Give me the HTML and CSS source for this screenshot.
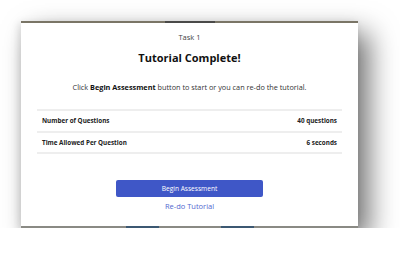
FILE: index.html
```html
<!DOCTYPE html>
<html lang="en">
<head>
    <meta charset="UTF-8">
    <meta name="viewport" content="width=device-width, initial-scale=1.0">
    <title>Tutorial Complete</title>
    <link rel="stylesheet" href="styles.css">
</head>
<body>
    <div class="stage">
        <!-- Modal card -->
        <div class="modal">
            <div class="top-edge"><span class="top-mark"></span></div>
            <div class="modal-body">
                <p class="task">Task 1</p>
                <h2 class="title">Tutorial Complete!</h2>
                <p class="intro">Click <b>Begin Assessment</b> button to start or you can re-do the tutorial.</p>

                <table class="info">
                    <tr>
                        <td>Number of Questions</td>
                        <td class="value">40 questions</td>
                    </tr>
                    <tr>
                        <td>Time Allowed Per Question</td>
                        <td class="value">6 seconds</td>
                    </tr>
                </table>

                <div class="actions">
                    <button type="button" class="btn-primary">Begin Assessment</button>
                    <a href="#" class="link">Re-do Tutorial</a>
                </div>
            </div>
            <div class="bottom-edge">
                <span class="bottom-mark"></span>
                <span class="bottom-mark"></span>
            </div>
        </div>
    </div>
</body>
</html>
```

FILE: styles.css
```css
body { margin: 0; background: #fff; font-family: "Open Sans", "Noto Sans", sans-serif; color: #222; }
.stage { padding: 21px 0 0 21px; }
.modal { width: 337px; background: #fff; box-shadow: 11px 12px 26px rgba(0, 0, 0, 0.55), -2px 2px 8px rgba(0, 0, 0, 0.12); }
.top-edge { height: 2px; background: #7a7566; display: flex; justify-content: center; }
.top-mark { width: 50px; background: #4a4a48; }
.bottom-edge { height: 2px; background: #8a8a84; display: flex; justify-content: center; gap: 62px; }
.bottom-mark { width: 33px; background: #3c5872; }
.modal-body { padding: 8px 16px 0; height: 203px; box-sizing: border-box; text-align: center; }
.task { margin: 0; font-size: 7.5px; color: #444; line-height: 12px; }
.title { margin: 7px 0 0; font-size: 11px; font-weight: 700; color: #111; line-height: 16px; }
.intro { margin: 15px 0 0; font-size: 7.3px; color: #333; line-height: 12px; }
.intro b { color: #111; }
.info { width: 100%; margin-top: 16px; border-collapse: collapse; font-size: 6.3px; font-weight: 700; color: #222; }
.info td { border-top: 2px solid #eeeeee; border-bottom: 2px solid #eeeeee; height: 19.5px; padding: 0 5px; text-align: left; }
.info td.value { text-align: right; }
.actions { margin-top: 26px; display: flex; flex-direction: column; align-items: center; }
.btn-primary { width: 147px; height: 17px; padding: 0; border: none; border-radius: 2px; background: #3f57c7; color: #fff; font-family: inherit; font-size: 6.6px; cursor: pointer; }
.link { margin-top: 3px; font-size: 7.5px; color: #5268cf; text-decoration: none; line-height: 12px; }
```
